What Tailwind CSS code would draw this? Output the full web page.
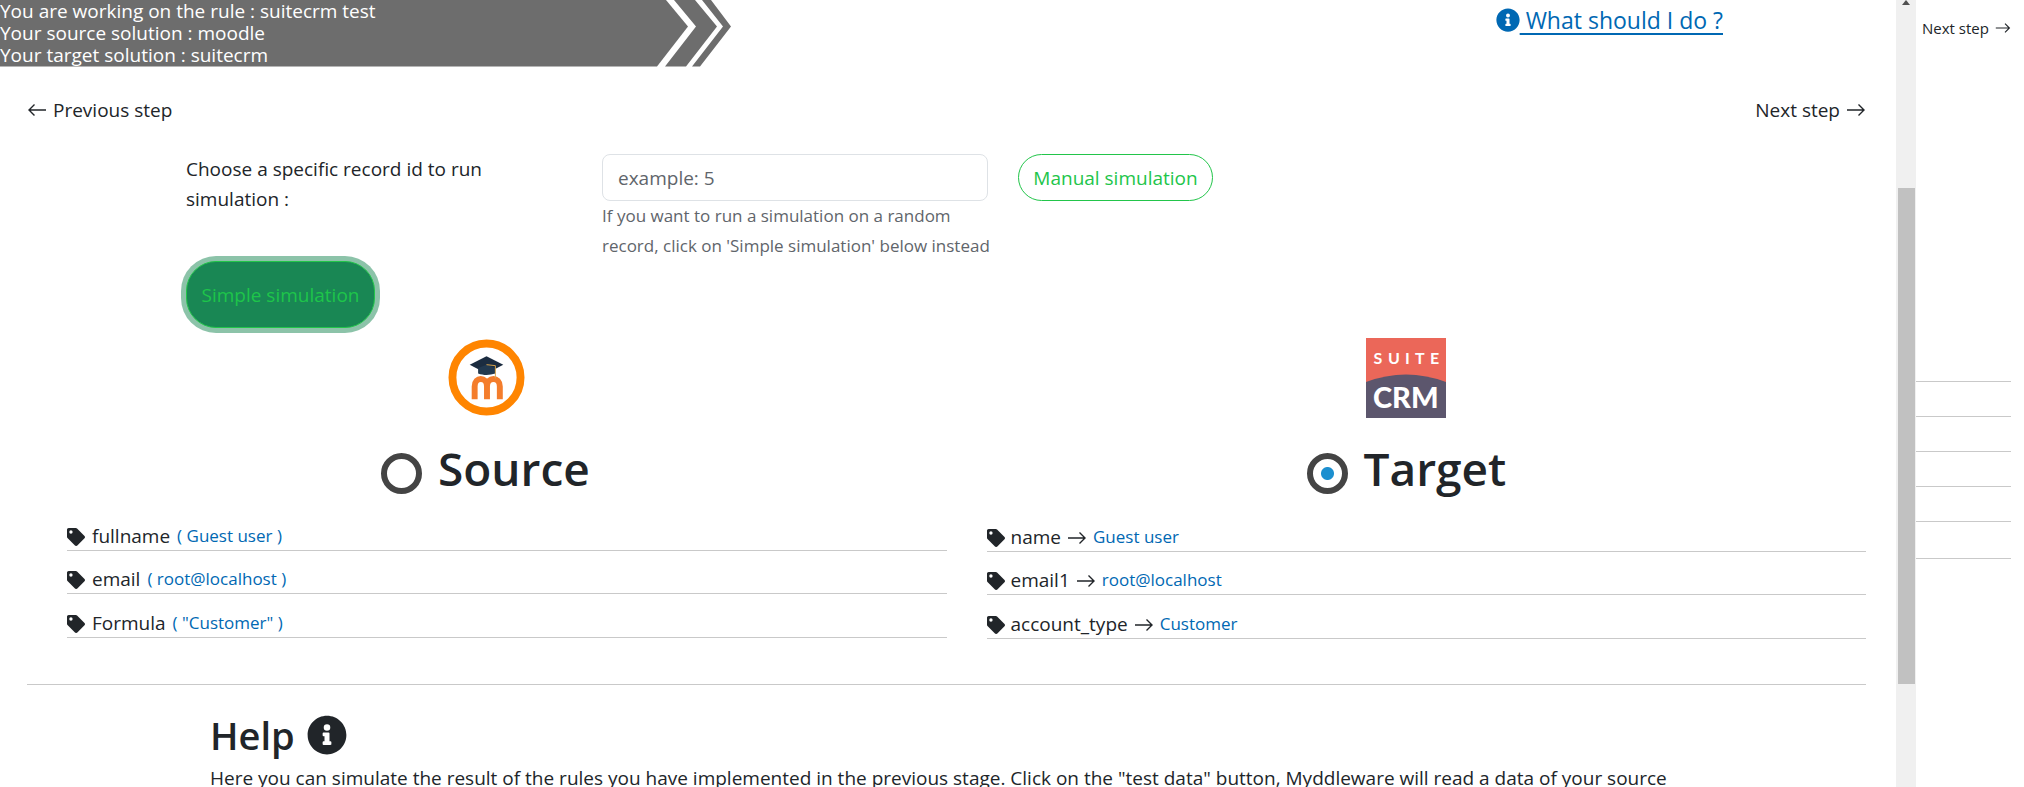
<!DOCTYPE html>
<html lang="en">
<head>
<meta charset="utf-8">
<title>Rule simulation</title>
<script src="https://cdn.jsdelivr.net/npm/@tailwindcss/browser@4"></script>
</head>
<body class="h-screen overflow-hidden bg-white font-['Open_Sans','Noto_Sans',sans-serif] text-[19px] leading-[30px] text-[#212529]">
<svg class="hidden">
  <symbol id="info" viewBox="0 0 512 512"><path fill="currentColor" d="M256 8C119 8 8 119 8 256s111 248 248 248 248-111 248-248S393 8 256 8zm0 110a42 42 0 1 1 0 84 42 42 0 0 1 0-84zm56 254c0 7-5 12-12 12h-88c-7 0-12-5-12-12v-24c0-7 5-12 12-12h12v-64h-12c-7 0-12-5-12-12v-24c0-7 5-12 12-12h64c7 0 12 5 12 12v100h12c7 0 12 5 12 12z"/></symbol>
  <symbol id="tag" viewBox="0 0 512 512"><path fill="currentColor" d="M0 252V48C0 21 21 0 48 0h204c13 0 25 5 34 14l212 212c19 19 19 49 0 68L294 498c-19 19-49 19-68 0L14 286c-9-9-14-21-14-34zM112 64a48 48 0 1 0 0 96 48 48 0 0 0 0-96z"/></symbol>
  <symbol id="right" viewBox="0 0 20 14"><path fill="none" stroke="currentColor" stroke-width="1.4" d="M1 7h17M12.500 1.500 18 7l-5.500 5.500"/></symbol>
  <symbol id="left" viewBox="0 0 20 14"><path fill="none" stroke="currentColor" stroke-width="1.400" d="M19 7H2M7.500 1.500 2 7l5.500 5.500"/></symbol>
</svg>
<div class="flex h-full">
  <main class="min-w-0 flex-1 overflow-hidden">
    <header class="flex items-start justify-between pr-[173px]">
      <div class="relative h-[67px] w-[732px] text-white">
        <svg class="absolute inset-0 h-full w-full" viewBox="0 0 732 67">
          <g fill="#6d6d6d"><path d="M0 0H666L688 26.500 657 66.500H0z"/><path d="M674 0H695L717 26.500 686 66.500H665L696 26.500z"/><path d="M702 0H711L731 26.500 700 66.500H692L723 26.500z"/></g>
        </svg>
        <p class="relative leading-[22px]">You are working on the rule : suitecrm test<br>Your source solution : moodle<br>Your target solution : suitecrm</p>
      </div>
      <a href="#help" class="flex items-center pt-[3px] text-[23px] leading-[34px] text-[#0068b3]"><svg class="size-6"><use href="#info"/></svg><span class="whitespace-pre underline underline-offset-4"> What should I do ?</span></a>
    </header>
    <div class="pl-[27px] pr-[30px]">
      <nav class="flex justify-between pt-7">
        <a href="#previous" class="flex items-center gap-1.5"><svg class="h-3.5 w-5"><use href="#left"/></svg>Previous step</a>
        <a href="#next" class="flex items-center gap-1.5">Next step<svg class="h-3.5 w-5"><use href="#right"/></svg></a>
      </nav>
      <form class="pl-[159px] pt-[29px]">
        <div class="flex items-start">
          <label for="record" class="w-[416px] pr-20">Choose a specific record id to run simulation :</label>
          <div class="w-[386px]">
            <input id="record" type="text" placeholder="example: 5" class="block h-[47px] w-full rounded-lg border border-[#dee2e6] px-[15px] placeholder:text-[#5f656b]">
            <p class="whitespace-nowrap text-[17px] text-[#5f656b]">If you want to run a simulation on a random<br>record, click on 'Simple simulation' below instead</p>
          </div>
          <button type="button" class="ml-[30px] h-[47px] w-[195px] rounded-full border border-[#22c54a] text-[#22c54a]">Manual simulation</button>
        </div>
        <button type="button" class="h-[67px] w-[189px] rounded-[30px] border border-[#22c54a] bg-[#198754] text-[#1ec54a] ring-[5px] ring-[#8cc3a9]">Simple simulation</button>
      </form>
      <div class="grid grid-cols-2 border-b border-[#c9c9c9] pb-[45px] pt-2.5">
        <section class="pl-10">
          <svg class="ml-[381px] mt-px size-[77px]" viewBox="0 0 78 78">
            <circle cx="39" cy="39" r="34.500" fill="#fff" stroke="#ff8500" stroke-width="8"/>
            <path fill="none" stroke="#f47d2c" stroke-width="6" d="M27 61V48c0-10 12.500-10 12.500 0v13M39.500 48c0-10 13-10 13 0v13"/>
            <path fill="#1b2c40" d="M22 26 39 17.500 56 26 39 35z"/><path fill="#22394f" d="M30.500 29.500 39 26l9 3.500V35c-6 2-12 2-17.500 0z"/>
            <path fill="none" stroke="#d9a54b" d="M39 26l9 1v13"/>
          </svg>
          <div class="mt-[22px] flex items-center gap-4 pl-[314px]">
            <input id="source" type="radio" name="side" class="mt-2.5 size-[41px] appearance-none rounded-full border-[6px] border-[#444]">
            <label for="source"><h1 class="text-[46px] font-semibold leading-[60px]">Source</h1></label>
          </div>
          <ul class="mt-2.5 leading-[28px]">
            <li class="flex h-[43px] items-end gap-[7px] border-b border-[#c9c9c9]"><svg class="mb-1 size-[18px]"><use href="#tag"/></svg>fullname <span class="text-[17px] text-[#0068b3]">( Guest user )</span></li>
            <li class="flex h-[43px] items-end gap-[7px] border-b border-[#c9c9c9]"><svg class="mb-1 size-[18px]"><use href="#tag"/></svg>email <span class="text-[17px] text-[#0068b3]">( root@localhost )</span></li>
            <li class="flex h-[44px] items-end gap-[7px] border-b border-[#c9c9c9]"><svg class="mb-1 size-[18px]"><use href="#tag"/></svg>Formula <span class="text-[17px] text-[#0068b3]">( "Customer" )</span></li>
          </ul>
        </section>
        <section class="pl-10">
          <svg class="ml-[379px] size-20" viewBox="0 0 80 80">
            <path fill="#eb6759" d="M0 0h80v80H0z"/><path fill="#5c566d" d="M0 44Q40 29 80 44V80H0z"/>
            <text x="7.500 22 39 49 64" y="26" fill="#fff" font-family="Lato" font-size="16" font-weight="700">SUITE</text>
            <text x="7" y="70" fill="#fff" font-family="Lato" font-size="29" font-weight="900">CRM</text>
          </svg>
          <div class="mt-5 flex items-center gap-4 pl-[320px]">
            <input id="target" type="radio" name="side" checked class="mt-2.5 size-[41px] appearance-none rounded-full border-[6px] border-[#444] bg-[radial-gradient(circle,#1c8fcf_6px,#fff_7px)]">
            <label for="target"><h1 class="text-[46px] font-semibold leading-[60px]">Target</h1></label>
          </div>
          <ul class="mt-[11px] leading-[28px]">
            <li class="flex h-[43px] items-end gap-1.5 border-b border-[#c9c9c9]"><svg class="mb-1 size-[18px]"><use href="#tag"/></svg>name <svg class="mb-1.5 h-3.5 w-5"><use href="#right"/></svg><span class="text-[17px] text-[#0068b3]">Guest user</span></li>
            <li class="flex h-[43px] items-end gap-1.5 border-b border-[#c9c9c9]"><svg class="mb-1 size-[18px]"><use href="#tag"/></svg>email1 <svg class="mb-1.5 h-3.5 w-5"><use href="#right"/></svg><span class="text-[17px] text-[#0068b3]">root@localhost</span></li>
            <li class="flex h-[44px] items-end gap-1.5 border-b border-[#c9c9c9]"><svg class="mb-1 size-[18px]"><use href="#tag"/></svg>account_type <svg class="mb-1.5 h-3.5 w-5"><use href="#right"/></svg><span class="text-[17px] text-[#0068b3]">Customer</span></li>
          </ul>
        </section>
      </div>
      <section id="help" class="px-[183px] pt-[26px]">
        <h2 class="flex items-center gap-3 text-[38px] font-semibold leading-[48px]">Help <svg class="size-10"><use href="#info"/></svg></h2>
        <p class="mt-1">Here you can simulate the result of the rules you have implemented in the previous stage. Click on the "test data" button, Myddleware will read a data of your source</p>
      </section>
    </div>
  </main>
  <div class="flex w-5 flex-col items-center bg-[#f0f0f0]" aria-hidden="true">
    <svg class="h-[188px] w-2.5" viewBox="0 0 10 188"><path fill="#505050" d="M5 0 9 5H1z"/></svg>
    <div class="h-[496px] w-[17px] bg-[#c1c1c1]"></div>
  </div>
  <aside class="w-[108px] pr-[13px]">
    <a href="#next" class="flex h-14 items-center gap-1.5 whitespace-nowrap pl-1.5 text-[15px]">Next step<svg class="h-3 w-4"><use href="#right"/></svg></a>
    <div class="mt-[325px] h-[179px] *:h-[35px] *:border-t *:border-[#c9c9c9]"><div></div><div></div><div></div><div></div><div></div><div class="mt-0.5"></div></div>
  </aside>
</div>
</body>
</html>
